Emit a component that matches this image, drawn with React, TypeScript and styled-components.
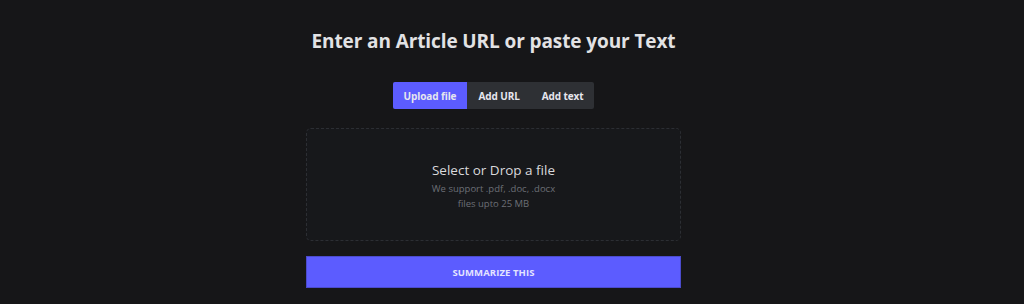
import styled, { createGlobalStyle } from 'styled-components';

const Global = createGlobalStyle`
  html, body {
    margin: 0;
    padding: 0;
    background-color: #161618;
    font-family: "Open Sans", "Noto Sans", sans-serif;
  }
`;

const Page = styled.div`
  display: flex;
  flex-direction: column;
  align-items: center;
  padding-top: 28px;
  padding-right: 37px;
`;
const Heading = styled.h1`
  margin: 0;
  color: #e2e2e4;
  font-size: 19px;
  font-weight: 700;
  letter-spacing: -0.1px;
  line-height: 26px;
`;
const Tabs = styled.div`
  display: flex;
  margin-top: 28px;
  background-color: #2e3034;
  border-radius: 2px;
  overflow: hidden;
`;
const Tab = styled.button<{ active?: boolean }>`
  border: none;
  height: 27px;
  padding: 0 11px;
  font-family: inherit;
  font-size: 10px;
  font-weight: 700;
  letter-spacing: -0.1px;
  color: #e6e6ee;
  background-color: ${(p) => (p.active ? '#5c5cff' : 'transparent')};
`;
const Drop = styled.div`
  box-sizing: border-box;
  width: 375px;
  height: 113px;
  margin-top: 19px;
  border: 1px dashed #2c2e33;
  border-radius: 5px;
  background-color: #17181b;
  display: flex;
  flex-direction: column;
  align-items: center;
  justify-content: center;
  padding-top: 2px;
`;
const DropTitle = styled.div`
  color: #d9d9dc;
  font-size: 13.5px;
  line-height: 21px;
`;
const DropNote = styled.div`
  color: #6c6f76;
  font-size: 9.5px;
  line-height: 15px;
`;
const Submit = styled.button`
  box-sizing: border-box;
  width: 375px;
  height: 32px;
  margin-top: 15px;
  border: 1px solid #4b4bcc;
  background-color: #5c5cff;
  color: #e4e4ff;
  font-family: inherit;
  font-size: 9.5px;
  font-weight: 700;
  letter-spacing: 0.1px;
`;

export default function App() {
  return (
    <>
      <Global />
      <Page>
        <Heading>Enter an Article URL or paste your Text</Heading>
        <Tabs>
          <Tab active>Upload file</Tab>
          <Tab>Add URL</Tab>
          <Tab>Add text</Tab>
        </Tabs>
        <Drop>
          <DropTitle>Select or Drop a file</DropTitle>
          <DropNote>We support .pdf, .doc, .docx</DropNote>
          <DropNote>files upto 25 MB</DropNote>
        </Drop>
        <Submit>SUMMARIZE THIS</Submit>
      </Page>
    </>
  );
}
